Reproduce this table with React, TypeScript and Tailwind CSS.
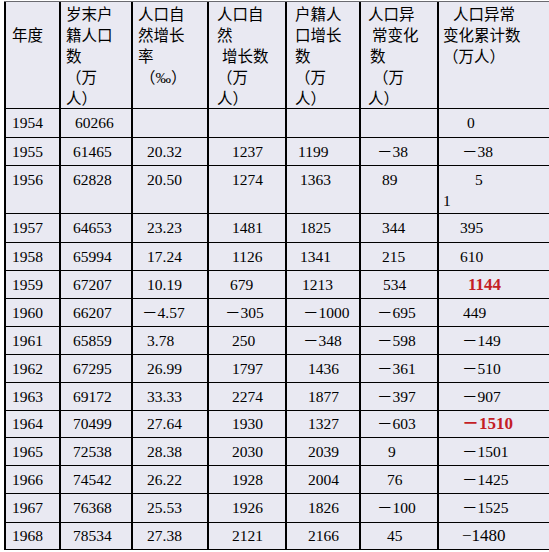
import React from "react";

type Cell = { t: string; p?: string; k?: "red" | "alt" };
type Row = { h: string; tall?: boolean; cells: Cell[] };

const W = ["w-[55px]", "w-[72px]", "w-[76px]", "w-[78px]", "w-[74px]", "w-[78px]", "w-[120px]"];
const PAD = ["pl-[6px]", "pl-[12px]", "pl-[14px]", "pl-[23px]", "pl-[21px]", "pl-[16px]", "pl-[23px]"];

const c = (t: string, p?: string, k?: "red" | "alt"): Cell => ({ t, p, k });

const rows: Row[] = [
  { h: "h-[29px]", cells: [c("1954"), c("60266", "pl-[14px]"), c(""), c(""), c(""), c(""), c("0", "pl-[28px]")] },
  { h: "h-[28px]", cells: [c("1955"), c("61465"), c("20.32"), c("1237"), c("1199", "pl-[11px]"), c("－38"), c("－38")] },
  { h: "h-[48px]", tall: true, cells: [c("1956"), c("62828"), c("20.50"), c("1274"), c("1363", "pl-[13px]"), c("89", "pl-[21px]"), c("5", "pl-[36px]")] },
  { h: "h-[29px]", cells: [c("1957"), c("64653"), c("23.23"), c("1481"), c("1825", "pl-[13px]"), c("344", "pl-[21px]"), c("395", "pl-[21px]")] },
  { h: "h-[28px]", cells: [c("1958"), c("65994"), c("17.24"), c("1126"), c("1341", "pl-[13px]"), c("215", "pl-[21px]"), c("610", "pl-[21px]")] },
  { h: "h-[28px]", cells: [c("1959"), c("67207"), c("10.19"), c("679", "pl-[21px]"), c("1213", "pl-[15px]"), c("534", "pl-[22px]"), c("1144", "pl-[29px]", "red")] },
  { h: "h-[28px]", cells: [c("1960"), c("66207"), c("－4.57", "pl-[9px]"), c("－305", "pl-[16px]"), c("－1000", "pl-[16px]"), c("－695"), c("449", "pl-[24px]")] },
  { h: "h-[28px]", cells: [c("1961"), c("65859"), c("3.78"), c("250"), c("－348", "pl-[16px]"), c("－598"), c("－149")] },
  { h: "h-[28px]", cells: [c("1962"), c("67295"), c("26.99"), c("1797"), c("1436"), c("－361"), c("－510")] },
  { h: "h-[28px]", cells: [c("1963"), c("69172"), c("33.33"), c("2274"), c("1877"), c("－397"), c("－907")] },
  { h: "h-[27px]", cells: [c("1964"), c("70499"), c("27.64"), c("1930"), c("1327"), c("－603"), c("－1510", "pl-[23px]", "red")] },
  { h: "h-[28px]", cells: [c("1965"), c("72538"), c("28.38"), c("2030"), c("2039"), c("9", "pl-[27px]"), c("－1501")] },
  { h: "h-[28px]", cells: [c("1966"), c("74542"), c("26.22"), c("1928"), c("2004"), c("76", "pl-[26px]"), c("－1425")] },
  { h: "h-[29px]", cells: [c("1967"), c("76368"), c("25.53"), c("1926"), c("1826"), c("－100"), c("－1525")] },
  { h: "h-[27px]", cells: [c("1968"), c("78534"), c("27.38"), c("2121"), c("2166"), c("45", "pl-[26px]"), c("−1480", "pl-[23px]", "alt")] },
];

type HLine = { t: string; m?: string };
const header: { p: string; lines: HLine[] }[] = [
  { p: "pl-[6px]", lines: [{ t: "\u00a0" }, { t: "年度" }] },
  { p: "pl-[5px]", lines: [{ t: "岁末户" }, { t: "籍人口" }, { t: "数" }, { t: "（万" }, { t: "人）" }] },
  { p: "pl-[5px]", lines: [{ t: "人口自" }, { t: "然增长" }, { t: "率" }, { t: "（‰）", m: "ml-[2px]" }] },
  { p: "pl-[8px]", lines: [{ t: "人口自" }, { t: "然" }, { t: "增长数", m: "ml-[5px]" }, { t: "（万" }, { t: "人）" }] },
  { p: "pl-[8px]", lines: [{ t: "户籍人" }, { t: "口增长" }, { t: "数" }, { t: "（万" }, { t: "人）" }] },
  { p: "pl-[7px]", lines: [{ t: "人口异" }, { t: "常变化", m: "ml-[4px]" }, { t: "数", m: "ml-[2px]" }, { t: "（万", m: "ml-[5px]" }, { t: "人）" }] },
  { p: "pl-[4px]", lines: [{ t: "人口异常", m: "ml-[10px]" }, { t: "变化累计数" }, { t: "（万人）" }] },
];

function Value({ cell }: { cell: Cell }) {
  if (cell.k === "red") {
    return <span className="text-[17px] font-bold text-[#c41e26]">{cell.t}</span>;
  }
  if (cell.k === "alt") {
    return <span className="text-[17px]">{cell.t}</span>;
  }
  return <span>{cell.t}</span>;
}

export default function App() {
  return (
    <div className="w-[549px] h-[552px] bg-white overflow-hidden pt-px pl-[4px]">
      <div className="w-[600px] border-t border-[#6a6a70] bg-[#e9e9f2] text-black font-['Liberation_Serif','Noto_Sans_CJK_SC',serif] text-[15.5px]">
        <div className="flex h-[107px] border-b border-black">
          {header.map((col, i) => (
            <div key={i} className={`${W[i]} shrink-0 border-l-2 border-black pt-[2px] ${col.p} leading-[21px] whitespace-nowrap`}>
              {col.lines.map((l, j) => (
                <div key={j} className={l.m ?? ""}>
                  {l.t}
                </div>
              ))}
            </div>
          ))}
        </div>
        {rows.map((r, ri) => (
          <div key={ri} className={`flex ${r.h} border-b border-black`}>
            {r.cells.map((cell, i) =>
              r.tall ? (
                <div key={i} className={`${W[i]} shrink-0 border-l-2 border-black whitespace-nowrap`}>
                  <div className={`${cell.p ?? PAD[i]} leading-[28px]`}>
                    <Value cell={cell} />
                  </div>
                  {i === 6 ? <div className="pl-[4px] leading-[14px]">1</div> : null}
                </div>
              ) : (
                <div key={i} className={`${W[i]} shrink-0 border-l-2 border-black flex items-center whitespace-nowrap ${cell.p ?? PAD[i]}`}>
                  <Value cell={cell} />
                </div>
              )
            )}
          </div>
        ))}
      </div>
    </div>
  );
}
